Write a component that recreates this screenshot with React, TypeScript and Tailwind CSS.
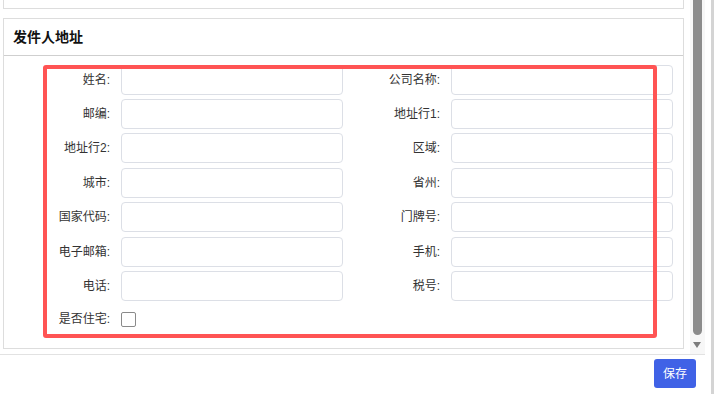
const leftFields = ["姓名", "邮编", "地址行2", "城市", "国家代码", "电子邮箱", "电话"];
const rightFields = ["公司名称", "地址行1", "区域", "省州", "门牌号", "手机", "税号"];

const Field = ({ label }: { label: string }) => {
  return (
    <div className="flex items-center gap-[9px]">
      <label className="w-[99px] pr-[2px] text-right text-[12px] text-[#333]">{label}:</label>
      <div className="w-[222px] h-[30px] rounded-[4px] border border-[#dcdfe6] bg-white" />
    </div>
  );
};

export default function App() {
  // grid fills row by row, so interleave the two columns
  const fields = leftFields.flatMap((l, i) => [l, rightFields[i]]);

  return (
    <div className="relative flex w-[714px] h-[394px] overflow-hidden bg-white font-['Liberation_Sans','Noto_Sans_CJK_SC',sans-serif]">
      <div className="flex flex-col w-[711px]">
        <div className="flex w-[705px] h-[355px] border-b border-[#e2e2e2]">
          <div className="w-[690px]">
            <div className="ml-[3px] w-[681px] h-[9px] border border-t-0 border-[#dddddd]" />
            <div className="ml-[3px] mt-[9px] w-[681px] h-[331px] border border-[#dddddd]">
              <div className="h-[37px] flex items-center pl-[9px] border-b border-[#cfcfcf]">
                <h2 className="text-[14px] font-bold text-[#111]">发件人地址</h2>
              </div>
              <div className="pl-[9px] pr-[10px] pt-[8.6px]">
                <div className="grid grid-cols-[330px_330px] gap-y-[4.4px]">
                  {fields.map((f) => (
                    <Field key={f} label={f} />
                  ))}
                </div>
                <div className="flex items-center gap-[9px] h-[28px] mt-[4.4px]">
                  <label className="w-[99px] pr-[2px] text-right text-[12px] text-[#333]">是否住宅:</label>
                  <div className="w-[15px] h-[15px] rounded-[2px] border border-[#8a8a8a]" />
                </div>
              </div>
            </div>
          </div>
          <div className="flex flex-col w-[15px] bg-[#f7f7f7]">
            <div className="ml-[3px] w-[9px] h-[335px] rounded-b-full bg-[#8c8c8c]" />
            <div className="ml-[3px] mt-[7px] w-0 h-0 border-l-[4.5px] border-r-[4.5px] border-t-[6px] border-l-transparent border-r-transparent border-t-[#7d7d7d]" />
          </div>
        </div>
        <div className="flex flex-1 justify-end items-start pt-[4px] pr-[15px]">
          <button className="w-[42px] h-[29px] rounded-[3px] bg-[#4062e6] text-white text-[12px]">保存</button>
        </div>
      </div>
      <div className="w-[3px] bg-[#d4d4d4]" />
      <div className="absolute left-[43px] top-[65px] w-[614px] h-[273px] border-4 border-[#ff5454] rounded-[3px]" />
    </div>
  );
}
